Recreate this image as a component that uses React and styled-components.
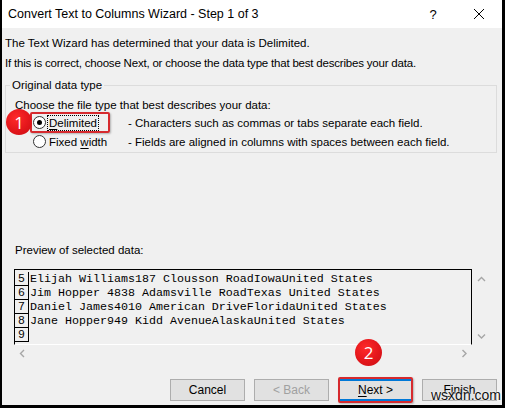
import React from 'react';
import styled, { createGlobalStyle } from 'styled-components';

const UI_FONT = '"Liberation Sans", Arial, sans-serif';
const MONO_FONT = '"Liberation Mono", "Courier New", monospace';

const GlobalStyle = createGlobalStyle`
  html, body {
    margin: 0;
    padding: 0;
    background: #fff;
  }
  body {
    width: 505px;
    height: 408px;
    overflow: hidden;
    font-family: ${UI_FONT};
    font-size: 11.5px;
    color: #000;
  }
`;

const Window = styled.div`
  position: relative;
  box-sizing: border-box;
  width: 505px;
  height: 408px;
  display: flex;
  flex-direction: column;
  background: #f0f0f0;
  border-left: 2px solid #000;
  border-right: 3px solid #000;
  border-bottom: 3px solid #000;
`;

const TitleBar = styled.div`
  height: 28px;
  flex: none;
  display: flex;
  align-items: center;
  background: #fff;
  padding-left: 6px;
  font-size: 12.5px;
`;

const Title = styled.div`
  flex: 1;
`;

const CaptionButton = styled.div`
  width: 46px;
  height: 28px;
  display: flex;
  align-items: center;
  justify-content: center;
  font-size: 13px;
`;

const Body = styled.div`
  flex: 1;
  display: flex;
  flex-direction: column;
  padding: 5px 5px 0 3px;
`;

const Line = styled.div`
  line-height: 20px;
  height: 20px;
  white-space: nowrap;
  letter-spacing: ${({ tight }) => (tight ? '-0.2px' : '0')};
`;

const GroupBox = styled.fieldset`
  margin: 4px 0 0 0;
  padding: 0 4px 1px 4px;
  border: 1px solid #dcdcdc;
  border-radius: 0;
  min-width: 0;
`;

const Legend = styled.legend`
  padding: 0 2px;
  line-height: 16px;
`;

const GroupText = styled.div`
  margin-top: 4px;
  line-height: 16px;
  padding-left: 5px;
  white-space: nowrap;
`;

const OptionRow = styled.div`
  position: relative;
  height: 19px;
  display: grid;
  grid-template-columns: 118px 1fr;
  align-items: center;
  white-space: nowrap;
`;

const RadioLabel = styled.div`
  display: flex;
  align-items: center;
  padding-left: 23px;
`;

const Radio = styled.span`
  box-sizing: border-box;
  width: 13px;
  height: 13px;
  border-radius: 50%;
  border: 1px solid #333;
  background: #fff;
  display: flex;
  align-items: center;
  justify-content: center;
  margin-right: 2px;

  &::after {
    content: '';
    display: ${({ checked }) => (checked ? 'block' : 'none')};
    width: 5px;
    height: 5px;
    border-radius: 50%;
    background: #000;
  }
`;

const OptionText = styled.span`
  padding: 0 1px;
  line-height: 14px;
  outline: ${({ focused }) => (focused ? '1px dotted #000' : 'none')};
`;

const Key = styled.u`
  text-decoration-thickness: 1px;
  text-underline-offset: 2px;
`;

const Highlight = styled.div`
  position: absolute;
  box-sizing: border-box;
  border: 2px solid #d62a2e;
  border-radius: 2px;
  box-shadow: 1px 1px 2px rgba(0, 0, 0, 0.25);
  pointer-events: none;
`;

const Badge = styled.div`
  position: absolute;
  width: ${({ size }) => size}px;
  height: ${({ size }) => size}px;
  border-radius: 50%;
  background: radial-gradient(circle at 40% 35%, #ff2a2a 0%, #e3161b 55%, #c80f14 100%);
  color: #fff;
  display: flex;
  align-items: center;
  justify-content: center;
  font-family: "Open Sans", sans-serif;
  font-size: 17px;
  z-index: 2;
`;

const PreviewLabel = styled.div`
  margin: 89px 0 0 10px;
  line-height: 16px;
`;

const Preview = styled.div`
  margin: 11px 0 0 9px;
  display: grid;
  grid-template-columns: 458px 19px;
  grid-template-rows: 76px 17px;
`;

const DataArea = styled.div`
  box-sizing: border-box;
  border-top: 1px solid #000;
  border-left: 1px solid #000;
  border-right: 1px solid #000;
  border-bottom: 1px solid #fff;
  padding-top: 2px;
  overflow: hidden;
`;

const DataRow = styled.div`
  display: flex;
  height: 14px;
`;

const RowNumber = styled.div`
  box-sizing: border-box;
  width: 14px;
  flex: none;
  border-right: 1px solid #000;
  border-bottom: 1px solid #000;
  text-align: center;
  font-size: 11.5px;
  line-height: 13px;
`;

const RowText = styled.div`
  padding-left: 1px;
  font-family: ${MONO_FONT};
  font-size: 11.67px;
  line-height: 14px;
  white-space: pre;
`;

const VScroll = styled.div`
  display: flex;
  flex-direction: column;
  justify-content: space-between;
  align-items: center;
  padding: 7px 0 5px;
`;

const HScroll = styled.div`
  grid-column: 1 / 2;
  display: flex;
  justify-content: space-between;
  align-items: center;
  padding: 0 4px 0 5px;
`;

const ButtonRow = styled.div`
  margin-top: 17px;
  display: flex;
  justify-content: flex-end;
  gap: 9px;
`;

const ButtonWrap = styled.div`
  position: relative;
`;

const Button = styled.div`
  box-sizing: border-box;
  width: 75px;
  height: 22px;
  display: flex;
  align-items: center;
  justify-content: center;
  background: #e1e1e1;
  border: ${({ primary }) => (primary ? '1px solid #0078d7' : '1px solid #adadad')};
  box-shadow: ${({ primary }) => (primary ? 'inset 0 0 0 1px #0078d7' : 'none')};
  color: ${({ disabled }) => (disabled ? '#a0a0a0' : '#000')};
  font-size: 12px;
`;

const Watermark = styled.div`
  position: absolute;
  left: 9px;
  top: 9px;
  font-family: ${UI_FONT};
  font-size: 14px;
  line-height: 14px;
  color: #111;
  text-shadow: 0 0 2px #fff, 0 0 2px #fff;
  pointer-events: none;
`;

const Chevron = ({ dir }) => {
  const paths = {
    up: 'M1 5 L4.5 1.5 L8 5',
    down: 'M1 1.5 L4.5 5 L8 1.5',
    left: 'M5 1 L1.5 4.5 L5 8',
    right: 'M1.5 1 L5 4.5 L1.5 8',
  };
  const vertical = dir === 'up' || dir === 'down';
  return (
    <svg width={vertical ? 9 : 7} height={vertical ? 7 : 9} viewBox={vertical ? '0 0 9 7' : '0 0 7 9'}>
      <path d={paths[dir]} fill="none" stroke="#a6a6a6" strokeWidth="1.4" />
    </svg>
  );
};

const rows = [
  ['5', 'Elijah Williams187 Clousson RoadIowaUnited States'],
  ['6', 'Jim Hopper 4838 Adamsville RoadTexas United States'],
  ['7', 'Daniel James4010 American DriveFloridaUnited States'],
  ['8', 'Jane Hopper949 Kidd AvenueAlaskaUnited States'],
  ['9', ''],
];

const App = () => (
  <>
    <GlobalStyle />
    <Window>
      <TitleBar>
        <Title>Convert Text to Columns Wizard - Step 1 of 3</Title>
        <CaptionButton>?</CaptionButton>
        <CaptionButton>
          <svg width="12" height="12" viewBox="0 0 12 12">
            <path d="M1 1 L11 11 M11 1 L1 11" stroke="#000" strokeWidth="1" />
          </svg>
        </CaptionButton>
      </TitleBar>
      <Body>
        <Line>The Text Wizard has determined that your data is Delimited.</Line>
        <Line tight>If this is correct, choose Next, or choose the data type that best describes your data.</Line>

        <GroupBox>
          <Legend>Original data type</Legend>
          <GroupText>Choose the file type that best describes your data:</GroupText>
          <OptionRow>
            <Badge size={26} style={{ left: -4, top: -4 }}>1</Badge>
            <Highlight style={{ left: 20, top: -1, width: 80, height: 21 }} />
            <RadioLabel>
              <Radio checked />
              <OptionText focused>
                <Key>D</Key>elimited
              </OptionText>
            </RadioLabel>
            <span>- Characters such as commas or tabs separate each field.</span>
          </OptionRow>
          <OptionRow>
            <RadioLabel>
              <Radio />
              <OptionText>
                Fixed <Key>w</Key>idth
              </OptionText>
            </RadioLabel>
            <span>- Fields are aligned in columns with spaces between each field.</span>
          </OptionRow>
        </GroupBox>

        <PreviewLabel>Preview of selected data:</PreviewLabel>
        <Preview>
          <DataArea>
            {rows.map(([n, text]) => (
              <DataRow key={n}>
                <RowNumber>{n}</RowNumber>
                <RowText>{text}</RowText>
              </DataRow>
            ))}
          </DataArea>
          <VScroll>
            <Chevron dir="up" />
            <Chevron dir="down" />
          </VScroll>
          <HScroll>
            <Chevron dir="left" />
            <Chevron dir="right" />
          </HScroll>
        </Preview>

        <ButtonRow>
          <Button>Cancel</Button>
          <Button disabled>&lt; Back</Button>
          <ButtonWrap>
            <Badge size={27} style={{ left: 17, top: -40 }}>2</Badge>
            <Button primary>
              <Key>N</Key>ext &gt;
            </Button>
            <Highlight style={{ left: 0, top: -2, width: 75, height: 26 }} />
          </ButtonWrap>
          <ButtonWrap>
            <Button>
              <Key>F</Key>inish
            </Button>
            <Watermark>wsxdn.com</Watermark>
          </ButtonWrap>
        </ButtonRow>
      </Body>
    </Window>
  </>
);

export default App;
